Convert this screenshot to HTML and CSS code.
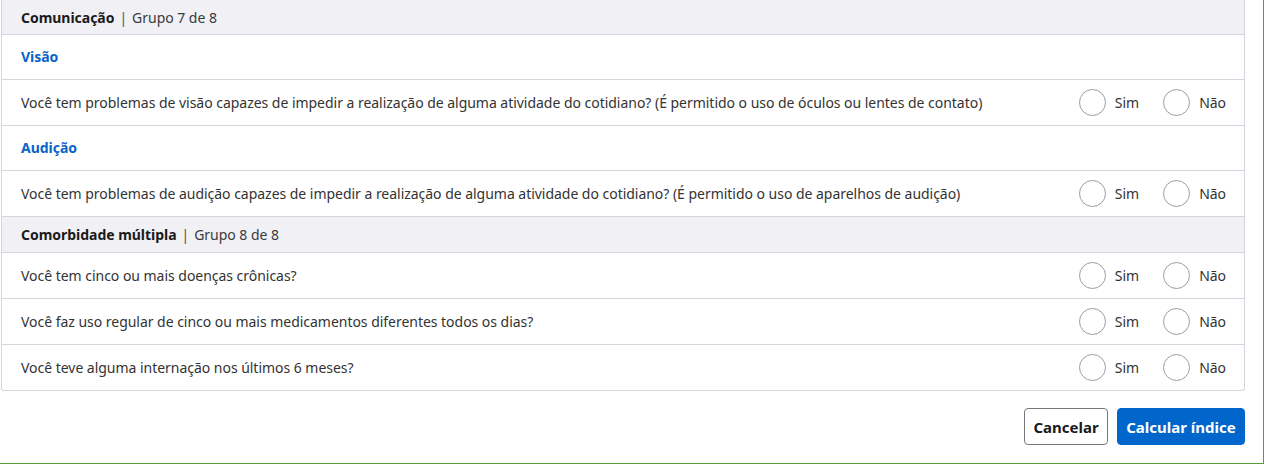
FILE: index.html
```html
<!DOCTYPE html>
<html lang="pt">
<head>
<meta charset="utf-8">
<link rel="stylesheet" href="styles.css">
</head>
<body>
<div class="frame">
  <div class="card">
    <div class="group-head first"><b>Comunicação</b><span class="sep">|</span><span>Grupo 7 de 8</span></div>
    <div class="sub">Visão</div>
    <div class="row">
      <div class="q">Você tem problemas de visão capazes de impedir a realização de alguma atividade do cotidiano? (É permitido o uso de óculos ou lentes de contato)</div>
      <div class="opts"><label class="opt"><span class="radio"></span>Sim</label><label class="opt"><span class="radio"></span>Não</label></div>
    </div>
    <div class="sub">Audição</div>
    <div class="row">
      <div class="q">Você tem problemas de audição capazes de impedir a realização de alguma atividade do cotidiano? (É permitido o uso de aparelhos de audição)</div>
      <div class="opts"><label class="opt"><span class="radio"></span>Sim</label><label class="opt"><span class="radio"></span>Não</label></div>
    </div>
    <div class="group-head"><b>Comorbidade múltipla</b><span class="sep red">|</span><span>Grupo 8 de 8</span></div>
    <div class="row">
      <div class="q">Você tem cinco ou mais doenças crônicas?</div>
      <div class="opts"><label class="opt"><span class="radio"></span>Sim</label><label class="opt"><span class="radio"></span>Não</label></div>
    </div>
    <div class="row">
      <div class="q">Você faz uso regular de cinco ou mais medicamentos diferentes todos os dias?</div>
      <div class="opts"><label class="opt"><span class="radio"></span>Sim</label><label class="opt"><span class="radio"></span>Não</label></div>
    </div>
    <div class="row last">
      <div class="q">Você teve alguma internação nos últimos 6 meses?</div>
      <div class="opts"><label class="opt"><span class="radio"></span>Sim</label><label class="opt"><span class="radio"></span>Não</label></div>
    </div>
  </div>
  <div class="actions">
    <button class="btn btn-outline">Cancelar</button>
    <button class="btn btn-primary">Calcular índice</button>
  </div>
</div>
</body>
</html>
```
FILE: styles.css
```css
html, body { margin: 0; padding: 0; background: #fff; }
body { font-family: "Noto Sans", "Liberation Sans", sans-serif; font-size: 14px; color: #333; letter-spacing: -0.03px; }
.frame {
  width: 1264px;
  height: 464px;
  box-sizing: border-box;
  border-right: 1px solid #5a9a3a;
  border-bottom: 1px solid #5a9a3a;
  padding: 0 18px 0 1px;
}
.card {
  border: 1px solid #d5d5de;
  border-top: none;
  border-radius: 0 0 3px 3px;
}
.group-head {
  height: 35px;
  background: #f0f0f5;
  border-bottom: 1px solid #d5d5de;
  display: flex;
  align-items: center;
  padding: 0 19px;
  color: #3a3a3a;
  font-size: 14px;
}
.group-head.first { height: 34px; }
.group-head b { color: #1a1a1a; font-weight: 700; }
.sep { margin: 0 5px; color: #555; }
.sep.red { color: #8a3a2a; }
.sub {
  display: flex;
  align-items: center;
  padding: 0 19px 2px;
  border-bottom: 1px solid #d5d5de;
  color: #0a64c8;
  font-weight: 700;
  box-sizing: border-box;
  height: 45px;
}
.row {
  height: 45px;
  display: flex;
  align-items: center;
  padding: 0 18px 0 19px;
  border-bottom: 1px solid #d5d5de;
}
.row.last { border-bottom: none; }
.q { flex: 1; color: #333; }
.opts { display: flex; gap: 24px; }
.opt { display: flex; align-items: center; gap: 9px; color: #333; }
.radio {
  width: 25px; height: 25px;
  border: 1px solid #9b9ba8;
  border-radius: 50%;
  background: #fff;
}
.actions {
  display: flex;
  justify-content: flex-end;
  gap: 9px;
  margin-top: 17px;
}
.btn {
  height: 37px;
  border-radius: 4px;
  font-family: inherit;
  font-size: 15px;
  font-weight: 700;
  padding: 0;
  cursor: pointer;
}
.btn-outline { width: 84px; background: #fff; border: 1px solid #77777f; color: #1a1a1a; }
.btn-primary { width: 128px; background: #0066cc; border: 1px solid #0066cc; color: #fff; }
```
